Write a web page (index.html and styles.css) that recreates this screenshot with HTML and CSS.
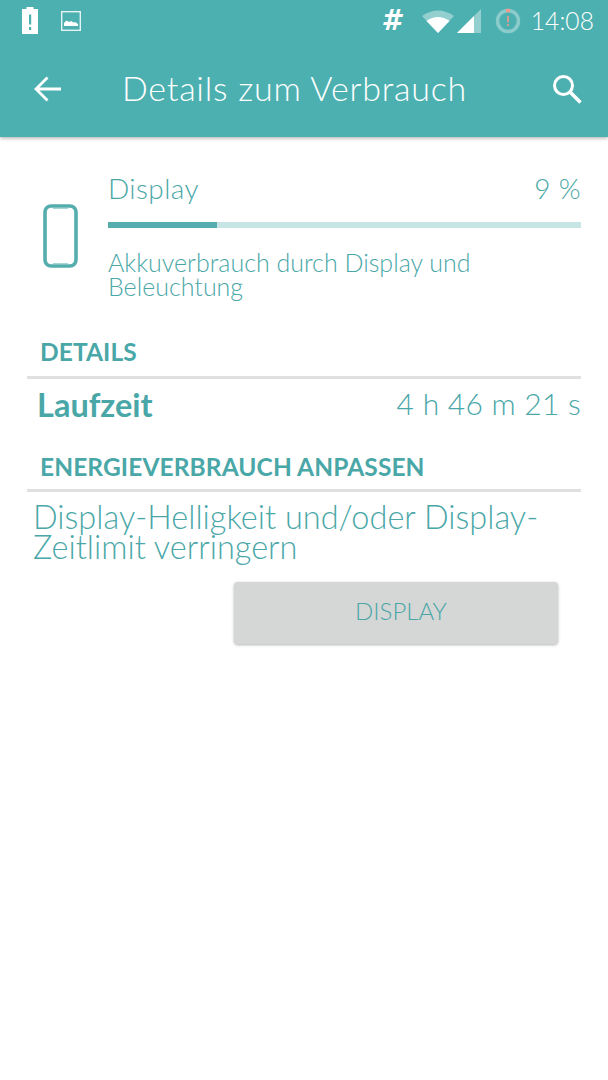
FILE: index.html
```html
<!DOCTYPE html>
<html lang="de">
<head>
<meta charset="utf-8">
<title>Details zum Verbrauch</title>
<link rel="stylesheet" href="styles.css">
</head>
<body>
<header class="appbar">
  <div class="status">
    <svg class="ic-batt" width="18" height="27" viewBox="0 0 18 27"><path fill="#fff" d="M5.500 0h7v2h4.500v25H1V2h4.500z"/><path fill="#4db0b0" d="M8 7.500h2.200v10H8zM8 20h2.200v3H8z"/></svg>
    <svg class="ic-img" width="20" height="20" viewBox="0 0 20 20"><rect x="0.700" y="0.700" width="18.600" height="18.600" fill="none" stroke="#fff" stroke-opacity=".85" stroke-width="1.400"/><path fill="#fff" d="M3 15v-3l2.500-2.500L8 11l2-1 2.500 1.500L14 11l3 2v2z"/></svg>
    <span class="status-gap"></span>
    <span class="hash">#</span>
    <svg class="ic-wifi" width="32" height="24" viewBox="0 0 32 24"><path fill="#fff" fill-opacity=".4" d="M0 7Q16-4 32 7L16 24z"/><path fill="#fff" d="M4.500 12Q16 4 27.500 12L16 24z"/></svg>
    <svg class="ic-sig" width="24" height="24" viewBox="0 0 24 24"><path fill="#fff" fill-opacity=".4" d="M24 0v24H0z"/><path fill="#fff" d="M17 7v17H0z"/></svg>
    <svg class="ic-ring" width="26" height="26" viewBox="0 0 26 26"><circle cx="13" cy="13" r="10.500" fill="none" stroke="#fff" stroke-opacity=".35" stroke-width="3.500"/><path d="M11 2.700a10.500 10.500 0 0 1 4 0" fill="none" stroke="#ee9a8e" stroke-width="3.500"/><path fill="#ee9a8e" d="M12.200 8h1.600v6.500h-1.600zM12.200 16h1.600v2h-1.600z"/></svg>
    <span class="time">14:08</span>
  </div>
  <div class="toolbar">
    <svg class="ic-back" width="30" height="28" viewBox="0 0 30 28"><path d="M28 14H3M14.500 2.500L3 14l11.500 11.500" fill="none" stroke="#fff" stroke-width="2.800"/></svg>
    <h1 class="title">Details zum Verbrauch</h1>
    <svg class="ic-search" width="32" height="32" viewBox="0 0 32 32"><circle cx="12.500" cy="12.500" r="9" fill="none" stroke="#fff" stroke-width="3"/><path d="M19 19l10.500 10.500" fill="none" stroke="#fff" stroke-width="3.600"/></svg>
  </div>
</header>
<main class="content">
  <section class="usage">
    <svg class="ic-phone" width="36" height="64" viewBox="0 0 36 64"><rect x="2" y="2" width="31" height="60" rx="6" fill="none" stroke="#55adad" stroke-width="3.600"/><path d="M10 4.500h15M10 59.500h15" stroke="#a5d5d5" stroke-width="1.200"/></svg>
    <div class="usage-main">
      <div class="usage-head"><span>Display</span><span>9 %</span></div>
      <div class="bar"><div class="bar-fill" style="width:23%"></div></div>
      <p class="usage-desc">Akkuverbrauch durch Display und Beleuchtung</p>
    </div>
  </section>
  <h2 class="section-title first">DETAILS</h2>
  <div class="row"><span class="row-label">Laufzeit</span><span class="row-value">4 h 46 m 21 s</span></div>
  <h2 class="section-title second">ENERGIEVERBRAUCH ANPASSEN</h2>
  <p class="advice">Display-Helligkeit und/oder Display-Zeitlimit verringern</p>
  <div class="actions"><button class="btn" type="button">DISPLAY</button></div>
</main>
</body>
</html>
```
FILE: styles.css
```css
* { box-sizing: border-box; }
html, body { margin: 0; padding: 0; }
body {
  width: 608px;
  height: 1080px;
  background: #fff;
  color: #4aa7a7;
  font-family: Lato, "Open Sans", sans-serif;
  font-weight: 300;
  overflow: hidden;
}
.appbar {
  height: 137px;
  background: #4db0b0;
  box-shadow: 0 1px 4px rgba(0,0,0,.35);
  color: #fff;
}
.status {
  height: 41px;
  display: flex;
  align-items: center;
  padding: 0 14px 0 21px;
}
.ic-img { margin-left: 22px; }
.status-gap { flex: 1; }
.hash { font: italic 700 28px "DejaVu Sans", sans-serif; margin-right: 21px; }
.ic-wifi { margin-right: 3px; }
.ic-ring { margin-left: 14px; margin-right: 10px; }
.time { font-size: 24.500px; letter-spacing: .1px; }
.toolbar {
  height: 96px;
  display: flex;
  align-items: center;
  padding: 0 25px 0 33px;
}
.title {
  flex: 1;
  margin: 0 0 0 59px;
  padding-bottom: 4px;
  font-size: 34px;
  font-weight: 300;
  letter-spacing: .75px;
}
.content { padding: 0 27px; }
.usage {
  display: flex;
  align-items: flex-start;
  padding-top: 34px;
}
.ic-phone { margin: 33px 0 0 16px; flex: none; }
.usage-main { flex: 1; margin-left: 29px; }
.usage-head {
  display: flex;
  justify-content: space-between;
  font-size: 28px;
  line-height: 34px;
  letter-spacing: .4px;
}
.bar { height: 6px; background: #c6e5e4; margin-top: 17px; }
.bar-fill { height: 100%; background: #55adad; }
.usage-desc {
  margin: 22px 0 0;
  font-size: 25px;
  line-height: 24px;
}
.section-title {
  margin: 0;
  font-size: 24.500px;
  font-weight: 700;
  line-height: 30px;
  padding-left: 13px;
  letter-spacing: .1px;
  border-bottom: 3px solid #e0e0e0;
}
.section-title.first { margin-top: 39px; height: 42px; }
.section-title.second { margin-top: 22px; height: 40px; }
.row {
  display: flex;
  justify-content: space-between;
  align-items: center;
  height: 51px;
  padding-left: 10px;
}
.row-label { font-size: 32.500px; font-weight: 700; }
.row-value { font-size: 30px; letter-spacing: .25px; padding-bottom: 4px; }
.advice {
  margin: 10px 0 0 6px;
  font-size: 32.500px;
  line-height: 30px;
}
.actions { display: flex; justify-content: flex-end; padding: 20px 23px 0 0; }
.btn {
  width: 324px;
  height: 62px;
  border: 0;
  border-radius: 4px;
  padding: 0 0 5px 10px;
  background: #d5d6d6;
  box-shadow: 0 1px 3px rgba(0,0,0,.3);
  color: #4aa7a7;
  font: 300 24px Lato, sans-serif;
}
```
